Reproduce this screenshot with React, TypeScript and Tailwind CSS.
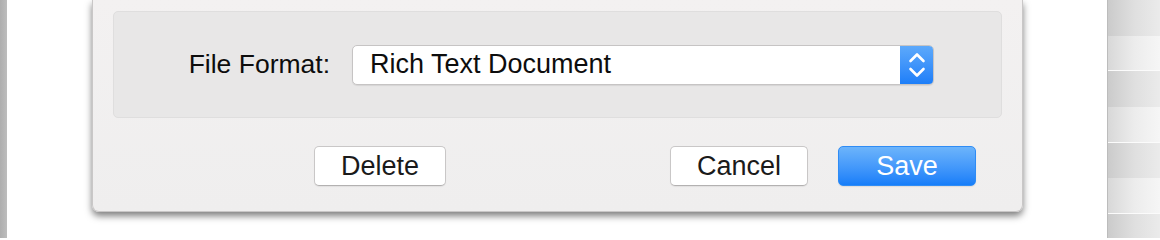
import React from "react";

const font = { fontFamily: '"Liberation Sans", Arial, sans-serif' };

function Stripes() {
  const rows = [0, 1, 2, 3, 4, 5, 6];
  return (
    <div className="flex h-full flex-1 flex-col border-l border-[#bcbcbc]">
      {rows.map((i) =>
        i % 2 === 0 ? (
          <div key={i} className="h-[35.7px] shrink-0 bg-linear-to-r from-[#cbcbcb] via-[#dfdfdf] to-[#ebebeb]" />
        ) : (
          <div key={i} className="h-[35.7px] shrink-0 border-b border-[#fbfbfb] bg-linear-to-r from-[#d8d8d8] via-[#ececec] to-[#f6f6f6]" />
        )
      )}
    </div>
  );
}

function PushButton({ label, width }: { label: string; width: string }) {
  return (
    <button
      className={`flex h-[40px] items-center justify-center rounded-[5px] border border-[#c9c7c7] border-b-[#b3b1b1] bg-white text-[27px] leading-none text-[#1a1a1a] shadow-[0_1px_1px_rgba(0,0,0,0.06)] ${width}`}
    >
      {label}
    </button>
  );
}

function Chevrons() {
  return (
    <svg width="18" height="28" viewBox="0 0 18 28" fill="none" stroke="white" strokeWidth="2.6" strokeLinecap="round" strokeLinejoin="round">
      <path d="M2.5 10 L9 3.5 L15.5 10" />
      <path d="M2.5 18 L9 24.5 L15.5 18" />
    </svg>
  );
}

export default function App() {
  return (
    <div className="flex h-[238px] w-[1160px] overflow-hidden bg-white" style={font}>
      <div className="h-full w-[7px] shrink-0 bg-linear-to-r from-[#aeaeae] to-[#bdbdbd]" />

      <div className="h-full w-[1100px] shrink-0 pl-[85px]">
        <div className="h-[212px] w-[931px] rounded-b-[7px] border-x border-b border-[#c9c7c7] bg-linear-to-b from-[#f3f1f1] to-[#efeeee] px-[20px] pt-[11px] shadow-[0_4px_7px_rgba(0,0,0,0.5)]">
          <div className="flex h-[107px] items-center rounded-[5px] border border-[#dfdede] bg-[#e8e7e7]">
            <span className="w-[216px] text-right text-[26.5px] leading-none text-[#0d0d0d]">File Format:</span>
            <div className="ml-[22px] flex h-[40px] w-[582px] overflow-hidden rounded-[5px] border border-[#c6c4c4] bg-white shadow-[0_1px_1px_rgba(0,0,0,0.08)]">
              <div className="flex flex-1 items-center pl-[17px] text-[27px] leading-none text-[#0d0d0d]">
                Rich Text Document
              </div>
              <div className="-my-px -mr-px flex w-[34px] items-center justify-center rounded-r-[5px] bg-linear-to-b from-[#5eaafb] to-[#1a7df8]">
                <Chevrons />
              </div>
            </div>
          </div>

          <div className="mt-[28px] flex items-center">
            <PushButton label="Delete" width="ml-[201px] w-[132px]" />
            <PushButton label="Cancel" width="ml-[224px] w-[138px]" />
            <button className="ml-[30px] flex h-[40px] w-[138px] items-center justify-center rounded-[5px] border border-[#2f8cf5] bg-linear-to-b from-[#6cb4fb] to-[#157ef9] text-[27px] leading-none text-white shadow-[0_1px_1px_rgba(0,0,0,0.08)]">
              Save
            </button>
          </div>
        </div>
      </div>

      <Stripes />
    </div>
  );
}
